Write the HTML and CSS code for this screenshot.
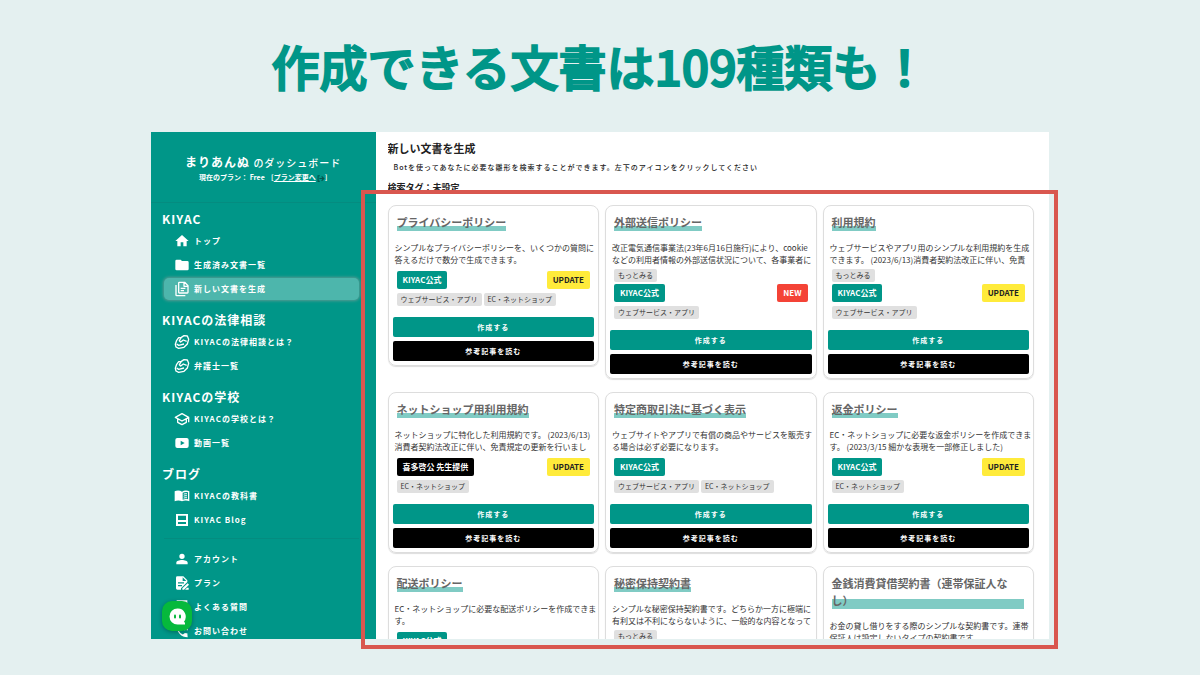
FILE: index.html
```
<!DOCTYPE html>
<html lang="ja">
<head>
    <meta charset="UTF-8">
    <meta name="viewport" content="width=device-width, initial-scale=1.0">
    <title>KIYAC 新しい文書を生成</title>
    <link rel="stylesheet" href="styles.css">
</head>
<body>
    <h1 class="headline">作成できる文書は109種類も！</h1>

    <div class="stage">
        <div class="dashboard">
            <aside class="sidebar">
                <div class="profile">
                    <p class="profile-name"><strong>まりあんぬ</strong> のダッシュボード</p>
                    <p class="profile-plan">現在のプラン： Free &nbsp;&nbsp; [<a href="#">プラン変更へ</a><svg class="exit" viewBox="0 0 24 24"><path d="M10 3H4v18h6v-3H7V6h3zM16 5l-2 2 3 3.500H9v3h8L14 17l2 2 7-7z"/></svg>]</p>
                </div>

                <nav class="menu">
                    <h2>KIYAC</h2>
                    <a href="#" class="item"><svg viewBox="0 0 24 24"><path d="M10 20v-6h4v6h5v-8h3L12 3 2 12h3v8z"/></svg>トップ</a>
                    <a href="#" class="item"><svg viewBox="0 0 24 24"><path d="M10 4H4a2 2 0 0 0-2 2v12a2 2 0 0 0 2 2h16a2 2 0 0 0 2-2V8a2 2 0 0 0-2-2h-8z"/></svg>生成済み文書一覧</a>
                    <a href="#" class="item active"><svg viewBox="0 0 24 24" class="line"><path d="M8 2h8l5 5v10a1 1 0 0 1-1 1H8a1 1 0 0 1-1-1V3a1 1 0 0 1 1-1zM15 2v6h6M3 6v15a1 1 0 0 0 1 1h13M10 11h7M10 14.500h5"/></svg>新しい文書を生成</a>

                    <h2>KIYACの法律相談</h2>
                    <a href="#" class="item"><svg viewBox="0 0 24 24" class="line"><path d="M11 5l4-2.500 5 .5 2 5-2 7-5 5-8 1.500-4-2-1-4 2-6 3-4zM11 5l-3 5 2 2 4-3 5 2M4 15l3 2 8-2"/></svg>KIYACの法律相談とは？</a>
                    <a href="#" class="item"><svg viewBox="0 0 24 24" class="line"><path d="M11 5l4-2.500 5 .5 2 5-2 7-5 5-8 1.500-4-2-1-4 2-6 3-4zM11 5l-3 5 2 2 4-3 5 2M4 15l3 2 8-2"/></svg>弁護士一覧</a>

                    <h2>KIYACの学校</h2>
                    <a href="#" class="item"><svg viewBox="0 0 24 24" class="line"><path d="M12 4L2 9.500 12 15l10-5.500zM5.500 12v5l6.500 3.500 6.500-3.500v-5M22 9.500V17"/></svg>KIYACの学校とは？</a>
                    <a href="#" class="item"><svg viewBox="0 0 24 24"><path fill-rule="evenodd" d="M5 4.500h14a3 3 0 0 1 3 3v9a3 3 0 0 1-3 3H5a3 3 0 0 1-3-3v-9a3 3 0 0 1 3-3zM10 8.500v7l6-3.500z"/></svg>動画一覧</a>

                    <h2>ブログ</h2>
                    <a href="#" class="item"><svg viewBox="0 0 24 24"><path fill-rule="evenodd" d="M1 5c3-1.500 8-1.500 11 .5C15 3.500 20 3.500 23 5v15c-3-1.500-8-1.500-11 0-3-1.500-8-1.500-11 0zM13 7v10.500c2.500-1 5.500-1.200 8-.5V6.300c-2.500-.8-5.500-.5-8 .7zM14.500 8.600c1.500-.6 3.500-.8 5-.6v1.500c-1.500-.2-3.500 0-5 .6zM14.500 11.600c1.500-.6 3.500-.8 5-.6v1.500c-1.500-.2-3.500 0-5 .6zM14.500 14.600c1.500-.6 3.500-.8 5-.6v1.500c-1.500-.2-3.500 0-5 .6z"/></svg>KIYACの教科書</a>
                    <a href="#" class="item"><svg viewBox="0 0 24 24"><path fill-rule="evenodd" d="M3 3h18v18H3zM6 5.500v6.500h12V5.500zM6 15v3h12v-3z"/></svg>KIYAC Blog</a>

                    <hr>
                    <a href="#" class="item"><svg viewBox="0 0 24 24"><path d="M12 12a4 4 0 1 0 0-8 4 4 0 0 0 0 8zM3.500 20h17v-2.500c0-2.500-4.500-4-8.500-4s-8.500 1.500-8.500 4z"/></svg>アカウント</a>
                    <a href="#" class="item"><svg viewBox="0 0 24 24"><path fill-rule="evenodd" d="M5 2h9l6 6v2.500L10.500 20v2H5a2 2 0 0 1-2-2V4a2 2 0 0 1 2-2zM13 3.500V9h5.500zM6 11v1.700h9V11zM6 15v1.700h6V15z"/><path d="M20.500 12.500l2 2L15 22h-2.500v-2zM16.500 22l3-3H22v3z"/></svg>プラン</a>
                    <a href="#" class="item"><svg viewBox="0 0 24 24"><path fill-rule="evenodd" d="M4 2h16v16h-5l-3 4-3-4H4zM11 14v2h2v-2zM8.500 8h2a1.500 1.500 0 1 1 3 0c0 1.500-2.500 2-2.500 5h2c0-2 2.500-2.500 2.500-5a3.500 3.500 0 0 0-7 0z"/></svg>よくある質問</a>
                    <a href="#" class="item"><svg viewBox="0 0 24 24"><path d="M20 15.500c-1.200 0-2.500-.2-3.600-.6l-3.200 2.500a15 15 0 0 1-6.600-6.600L9 8.500C8.700 7.300 8.500 6 8.500 4.500H4C4 14 11 21.500 20.500 21.500zM13 3v2a6 6 0 0 1 6 6h2a8 8 0 0 0-8-8zM13 7v2a2 2 0 0 1 2 2h2a4 4 0 0 0-4-4z"/></svg>お問い合わせ</a>
                </nav>

                <button class="chat" aria-label="LINE"><svg viewBox="0 0 30 30"><path fill="#fff" d="M15.500 7.500a8 8 0 1 0 0 16h7.500v-1.500l-1-1.500a8 8 0 0 0-6.500-13z"/><rect x="12" y="13.500" width="2" height="4" rx="1" fill="#06b93c"/><rect x="17" y="13.500" width="2" height="4" rx="1" fill="#06b93c"/></svg></button>
            </aside>

            <main class="main">
                <header class="page-head">
                    <h2>新しい文書を生成</h2>
                    <p class="lead">Botを使ってあなたに必要な雛形を検索することができます。左下のアイコンをクリックしてください</p>
                    <p class="tag-state">検索タグ：未設定</p>
                </header>

                <div class="cards">
                    <article class="card">
                        <h3>プライバシーポリシー</h3>
                        <p class="desc">シンプルなプライバシーポリシーを、いくつかの質問に<br>答えるだけで数分で生成できます。</p>
                        <div class="badges"><span class="badge">KIYAC公式</span><span class="badge update">UPDATE</span></div>
                        <div class="tags"><span class="tag">ウェブサービス・アプリ</span><span class="tag">EC・ネットショップ</span></div>
                        <div class="actions"><button>作成する</button><button class="read">参考記事を読む</button></div>
                    </article>

                    <article class="card">
                        <h3>外部送信ポリシー</h3>
                        <p class="desc">改正電気通信事業法(23年6月16日施行)により、cookie<br>などの利用者情報の外部送信状況について、各事業者に</p>
                        <button class="tag more">もっとみる</button>
                        <div class="badges"><span class="badge">KIYAC公式</span><span class="badge new">NEW</span></div>
                        <div class="tags"><span class="tag">ウェブサービス・アプリ</span></div>
                        <div class="actions"><button>作成する</button><button class="read">参考記事を読む</button></div>
                    </article>

                    <article class="card">
                        <h3>利用規約</h3>
                        <p class="desc">ウェブサービスやアプリ用のシンプルな利用規約を生成<br>できます。 (2023/6/13)消費者契約法改正に伴い、免責</p>
                        <button class="tag more">もっとみる</button>
                        <div class="badges"><span class="badge">KIYAC公式</span><span class="badge update">UPDATE</span></div>
                        <div class="tags"><span class="tag">ウェブサービス・アプリ</span></div>
                        <div class="actions"><button>作成する</button><button class="read">参考記事を読む</button></div>
                    </article>

                    <article class="card">
                        <h3>ネットショップ用利用規約</h3>
                        <p class="desc">ネットショップに特化した利用規約です。 (2023/6/13)<br>消費者契約法改正に伴い、免責規定の更新を行いまし</p>
                        <div class="badges"><span class="badge teacher">喜多啓公 先生提供</span><span class="badge update">UPDATE</span></div>
                        <div class="tags"><span class="tag">EC・ネットショップ</span></div>
                        <div class="actions"><button>作成する</button><button class="read">参考記事を読む</button></div>
                    </article>

                    <article class="card">
                        <h3>特定商取引法に基づく表示</h3>
                        <p class="desc">ウェブサイトやアプリで有償の商品やサービスを販売す<br>る場合は必ず必要になります。</p>
                        <div class="badges"><span class="badge">KIYAC公式</span></div>
                        <div class="tags"><span class="tag">ウェブサービス・アプリ</span><span class="tag">EC・ネットショップ</span></div>
                        <div class="actions"><button>作成する</button><button class="read">参考記事を読む</button></div>
                    </article>

                    <article class="card">
                        <h3>返金ポリシー</h3>
                        <p class="desc">EC・ネットショップに必要な返金ポリシーを作成できま<br>す。 (2023/3/15 細かな表現を一部修正しました)</p>
                        <div class="badges"><span class="badge">KIYAC公式</span><span class="badge update">UPDATE</span></div>
                        <div class="tags"><span class="tag">EC・ネットショップ</span></div>
                        <div class="actions"><button>作成する</button><button class="read">参考記事を読む</button></div>
                    </article>

                    <article class="card">
                        <h3>配送ポリシー</h3>
                        <p class="desc">EC・ネットショップに必要な配送ポリシーを作成できま<br>す。</p>
                        <div class="badges"><span class="badge">KIYAC公式</span></div>
                    </article>

                    <article class="card">
                        <h3>秘密保持契約書</h3>
                        <p class="desc">シンプルな秘密保持契約書です。どちらか一方に極端に<br>有利又は不利にならないように、一般的な内容となって</p>
                        <button class="tag more">もっとみる</button>
                    </article>

                    <article class="card">
                        <h3>金銭消費貸借契約書（連帯保証人なし）</h3>
                        <p class="desc">お金の貸し借りをする際のシンプルな契約書です。連帯<br>保証人は設定しないタイプの契約書です。</p>
                    </article>
                </div>
            </main>
        </div>
        <div class="frame"></div>
    </div>
</body>
</html>
```
FILE: styles.css
```
* {
    box-sizing: border-box;
}
body {
    display: flex;
    flex-direction: column;
    height: 100vh;
    margin: 0;
    overflow: hidden;
    background-color: #e4f0f0;
    color: #333;
    font-family: "Noto Sans CJK JP", sans-serif;
    font-size: 8px;
}
h1, h2, h3, p {
    margin: 0;
}
button {
    border: none;
    font-family: inherit;
    cursor: pointer;
}
.headline {
    padding: 33px 0 35px;
    text-align: center;
    color: #009688;
    font-size: 48px;
    line-height: 64px;
    font-weight: 500;
    -webkit-text-stroke: 2px #009688;
}

.stage {
    position: relative;
    flex: 1;
    min-height: 0;
    margin: 0 151px 36px;
}
.dashboard {
    display: flex;
    height: 100%;
    overflow: hidden;
    background: white;
}
.frame {
    position: absolute;
    top: 58px;
    right: -9px;
    bottom: -10px;
    left: 210px;
    border: 4px solid #d9574f;
    pointer-events: none;
}

/* sidebar */
.sidebar {
    position: relative;
    flex: 0 0 25%;
    overflow: hidden;
    background: #009688;
    color: white;
}
.profile {
    padding: 22px 0 19px;
    border-bottom: 1px solid #048c80;
    text-align: center;
}
.profile-name {
    font-size: 10px;
    line-height: 18px;
    font-weight: 500;
    letter-spacing: 1px;
}
.profile-name strong {
    font-size: 12px;
    line-height: 12px;
}
.profile-plan {
    font-size: 7px;
    line-height: 10px;
    font-weight: 700;
}
.profile-plan a {
    color: white;
}
.exit {
    width: 9px;
    height: 9px;
    vertical-align: middle;
    fill: #04554d;
}
.menu {
    padding: 0 17px 0 13px;
    letter-spacing: 1px;
}
.menu h2 {
    margin: 12px -2px 3px;
    font-size: 12px;
    line-height: 16px;
}
.menu h2:first-child {
    margin-top: 8px;
}
.menu hr {
    margin: 7px 0 9px;
    border: none;
    border-top: 1px solid #048c80;
}
.item {
    display: flex;
    align-items: center;
    gap: 4px;
    height: 22px;
    margin: 1px 0 2px;
    padding-left: 10px;
    border-radius: 5px;
    color: white;
    font-size: 8px;
    font-weight: 700;
    text-decoration: none;
}
.item svg {
    width: 16px;
    height: 16px;
    fill: white;
}
.item .line {
    fill: none;
    stroke: white;
    stroke-width: 2;
    stroke-linejoin: round;
}
.item.active {
    background: #4db6ac;
    box-shadow: 0 0 3px 1px #5a9a92;
}
.chat {
    position: absolute;
    left: 11px;
    bottom: 8px;
    width: 30px;
    height: 30px;
    padding: 0;
    border-radius: 10px;
    background: #06b93c;
    box-shadow: 0 1px 4px rgba(0, 0, 0, 0.3);
}
.chat svg {
    display: block;
}

/* document list */
.main {
    flex: 1;
    min-width: 0;
    padding: 0 15px 0 12px;
}
.page-head {
    height: 58px;
    padding-top: 8px;
    overflow: hidden;
    color: #222;
}
.page-head h2 {
    font-size: 11px;
    line-height: 16px;
}
.lead {
    padding: 5px 6px;
    font-size: 7px;
    line-height: 12px;
    font-weight: 500;
    letter-spacing: 1px;
}
.tag-state {
    font-size: 9px;
    line-height: 20px;
    font-weight: 700;
}
.cards {
    display: grid;
    grid-template-columns: repeat(3, minmax(0, 1fr));
    align-items: start;
    gap: 13px 6px;
    padding-top: 15px;
}
.card {
    padding: 8px 4px 4px 8px;
    border: 1px solid #ddd;
    border-radius: 8px;
    box-shadow: 0 1px 1px #ddd;
}
.card h3 {
    width: fit-content;
    max-width: 192px;
    background: linear-gradient(transparent 70%, #80cbc4 70%);
    color: #666;
    font-size: 11px;
    line-height: 17px;
    font-weight: 700;
}
.desc {
    margin: 11px 0 3px -2px;
    font-size: 8px;
    line-height: 12px;
    white-space: nowrap;
}
.badges {
    display: flex;
    justify-content: space-between;
    padding: 2px 4px 4px 0;
}
.badge {
    padding: 0 6px;
    border-radius: 2px;
    background: #009688;
    color: white;
    font-size: 8px;
    line-height: 18px;
    font-weight: 700;
}
.badge.update {
    background: #ffeb3b;
    color: #222;
}
.badge.new {
    background: #f44336;
}
.badge.teacher {
    background: black;
}
.tags {
    display: flex;
    gap: 2px;
}
.tag {
    padding: 0 4px;
    border-radius: 2px;
    background: #e0e0e0;
    color: #333;
    font-size: 7px;
    line-height: 13px;
}
.more {
    display: block;
}
.actions {
    display: grid;
    gap: 4px;
    margin: 11px 0 0 -4px;
}
.actions button {
    height: 20px;
    padding: 0;
    border-radius: 2px;
    background: #009688;
    color: white;
    font-size: 7px;
    font-weight: 700;
    letter-spacing: 1px;
}
.actions .read {
    background: black;
}
```
